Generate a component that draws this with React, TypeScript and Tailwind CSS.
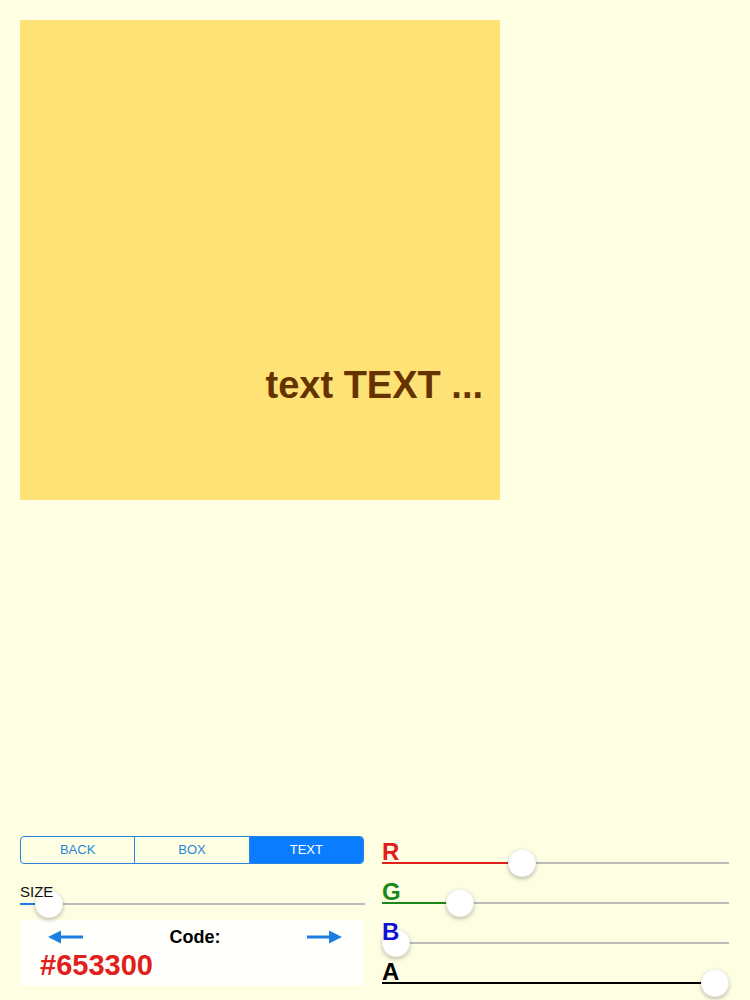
import type { ReactNode } from 'react';

const CODE = '#653300';

// r, g, b from the hex code (0..1)
const rgb = [1, 3, 5].map((i) => parseInt(CODE.slice(i, i + 2), 16) / 255);

interface SliderProps {
  value: number; // 0..1
  width: number;
  fill: string;
}

function Slider({ value, width, fill }: SliderProps) {
  const thumbLeft = Math.round(value * (width - 28));
  return (
    <div className="relative h-[2px] bg-[#bdbdb8]" style={{ width }}>
      <div className={`absolute left-0 top-0 h-[2px] ${fill}`} style={{ width: thumbLeft + 2 }} />
      <div
        className="absolute top-1/2 -translate-y-1/2 w-[28px] h-[28px] rounded-full bg-white border border-black/5 shadow-[0_2px_4px_rgba(0,0,0,0.25)]"
        style={{ left: thumbLeft }}
      />
    </div>
  );
}

function ArrowLeft() {
  return (
    <svg width="36" height="16" viewBox="0 0 36 16">
      <line x1="10" y1="8" x2="35" y2="8" stroke="#1a7fe0" strokeWidth="3" />
      <polygon points="0,8 13,1.5 13,14.5" fill="#1a7fe0" />
    </svg>
  );
}

function ArrowRight() {
  return (
    <svg width="36" height="16" viewBox="0 0 36 16">
      <line x1="1" y1="8" x2="26" y2="8" stroke="#1a7fe0" strokeWidth="3" />
      <polygon points="36,8 23,1.5 23,14.5" fill="#1a7fe0" />
    </svg>
  );
}

function Segment({ children, active, last }: { children: ReactNode; active?: boolean; last?: boolean }) {
  return (
    <div
      className={`flex-1 flex items-center justify-center text-[13px] ${
        last ? '' : 'border-r border-[#2a86dc]'
      } ${active ? 'bg-[#0a7cff] text-white' : 'text-[#2a86dc]'}`}
    >
      {children}
    </div>
  );
}

const channels = [
  { label: 'R', value: rgb[0], text: 'text-[#e0201c]', fill: 'bg-[#e0201c]' },
  { label: 'G', value: rgb[1], text: 'text-[#1a8a1a]', fill: 'bg-[#1a8a1a]' },
  { label: 'B', value: rgb[2], text: 'text-[#1010d8]', fill: 'bg-[#1010d8]' },
  { label: 'A', value: 1, text: 'text-black', fill: 'bg-black' },
];

export default function App() {
  return (
    <div className="w-[750px] h-[1000px] bg-[#fefee2] font-['Liberation_Sans',Arial,sans-serif] overflow-hidden">
      {/* preview box */}
      <div className="ml-[20px] mt-[20px] w-[480px] h-[480px] bg-[#ffe276] flex flex-col justify-end items-end pr-[17px] pb-[96px]">
        <span className="text-[38px] leading-none font-bold text-[#653300]">text TEXT ...</span>
      </div>

      {/* controls */}
      <div className="mt-[336px] ml-[20px] flex items-start">
        {/* left column */}
        <div className="w-[345px] flex flex-col">
          <div className="w-[344px] h-[28px] flex rounded-[4px] border border-[#2a86dc] overflow-hidden">
            <Segment>BACK</Segment>
            <Segment>BOX</Segment>
            <Segment active last>
              TEXT
            </Segment>
          </div>

          <span className="relative z-10 mt-[19px] text-[15px] leading-[18px] text-[#111]">SIZE</span>
          <div className="mt-[2px]">
            <Slider value={0.047} width={345} fill="bg-[#1a7fe0]" />
          </div>

          <div className="mt-[15px] w-[344px] h-[66px] bg-[#fffffb] flex flex-col">
            <div className="mt-[7px] h-[20px] pr-[22px] pl-[28px] flex items-center justify-between">
              <ArrowLeft />
              <span className="text-[18px] leading-[20px] font-bold text-black">Code:</span>
              <ArrowRight />
            </div>
            <span className="mt-[4px] ml-[20px] text-[29px] leading-[28px] font-bold text-[#e0201c]">{CODE}</span>
          </div>
        </div>

        {/* right column */}
        <div className="ml-[17px] w-[347px] pt-[6px] flex flex-col gap-[18px]">
          {channels.map((c) => (
            <div key={c.label} className="flex flex-col">
              <span className={`relative z-10 text-[24px] leading-[20px] font-bold ${c.text}`}>{c.label}</span>
              <Slider value={c.value} width={347} fill={c.fill} />
            </div>
          ))}
        </div>
      </div>
    </div>
  );
}
